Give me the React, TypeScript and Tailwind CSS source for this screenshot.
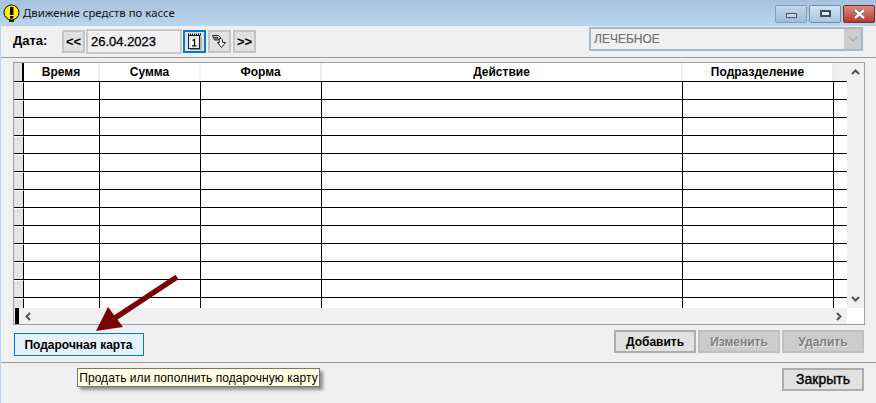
const rows = Array.from({ length: 13 });

function Cells() {
  return (
    <>
      <div className="w-[10px] shrink-0 border-r border-black bg-[#e3e3e3] border-t border-t-white" />
      <div className="w-[76px] shrink-0 border-r border-black" />
      <div className="w-[101px] shrink-0 border-r border-black" />
      <div className="w-[121px] shrink-0 border-r border-black" />
      <div className="w-[361px] shrink-0 border-r border-black" />
      <div className="w-[151px] shrink-0 border-r border-black" />
      <div className="flex-1" />
    </>
  );
}

function Btn({ label, disabled, large }: { label: string; disabled?: boolean; large?: boolean }) {
  return (
    <div
      className={`flex h-[23px] w-[82px] items-center justify-center border-2 ${
        large ? "text-[14px] [-webkit-text-stroke:0.35px_black]" : "text-[12px] font-bold"
      } ${
        disabled
          ? "border-[#bfbfbf] bg-[#cccccc] text-[#7f7f7f] [text-shadow:1px_1px_0_#e8e8e8]"
          : "border-[#adadad] bg-[#e1e1e1] text-black"
      }`}
    >
      {label}
    </div>
  );
}

function NavBtn({ children, active }: { children: React.ReactNode; active?: boolean }) {
  return (
    <div
      className={`flex h-[23px] w-[23px] items-center justify-center border-2 bg-[#e1e1e1] text-[13px] font-bold ${
        active ? "border-[#0078d7]" : "border-[#c4c4c4]"
      }`}
    >
      {children}
    </div>
  );
}

export default function App() {
  return (
    <div className="relative flex h-[403px] w-[876px] flex-col overflow-hidden bg-[#f0f0f0] font-['Liberation_Sans',Arial,sans-serif] text-black">
      {/* title bar */}
      <div className="flex h-[26px] shrink-0 items-center bg-gradient-to-b from-[#a6c1dc] to-[#bad5ee] pl-[3px]">
        <svg width="17" height="19" viewBox="0 0 17 19" className="shrink-0">
          <circle cx="8.5" cy="8.5" r="7.5" fill="#ffee00" stroke="#000" strokeWidth="1" />
          <rect x="7" y="3" width="3.4" height="8" fill="#000" />
          <rect x="7" y="12" width="3.4" height="2.5" fill="#000" />
          <rect x="6" y="16" width="5" height="2" fill="#222" />
        </svg>
        <span className="ml-[3px] font-['Noto_Sans',sans-serif] text-[11.4px] text-[#111]">Движение средств по кассе</span>
        <div className="ml-auto mr-[1px] mt-[5px] flex self-start">
          <div className="flex h-[18px] w-[32px] items-center justify-center rounded-[2px] border border-[#7f9dbc] bg-gradient-to-b from-[#c3d7ea] to-[#9fbcd8]">
            <div className="mt-[3px] h-[5px] w-[11px] border border-[#46586c] bg-[#c9d3de]" />
          </div>
          <div className="ml-[2px] flex h-[18px] w-[32px] items-center justify-center rounded-[2px] border border-[#6f8dac] bg-gradient-to-b from-[#d4e3f2] to-[#a9c4de]">
            <div className="mb-[1px] h-[7px] w-[11px] border-2 border-[#3d4f63] bg-[#e8eef4]" />
          </div>
          <div className="ml-[2px] flex h-[18px] w-[32px] items-center justify-center rounded-[2px] border border-[#6f3028] bg-gradient-to-b from-[#d9897c] to-[#b93a2c]">
            <svg width="13" height="10" viewBox="0 0 13 10">
              <path d="M2 1 L11 9 M11 1 L2 9" stroke="#555" strokeWidth="3.6" />
              <path d="M2 1 L11 9 M11 1 L2 9" stroke="#fff" strokeWidth="2.4" />
            </svg>
          </div>
        </div>
      </div>

      <div className="flex min-h-0 flex-1 flex-col border-l border-[#b9d4ee]">
        {/* date row */}
        <div className="flex h-[32px] shrink-0 items-start border-b border-[#9a9a9a] pl-[12px] pt-[1px]">
          <span className="mt-[4px] w-[49px] text-[13px] font-bold">Дата:</span>
          <div className="mt-[3px] flex items-start">
            <NavBtn>&lt;&lt;</NavBtn>
            <div className="ml-[1px] mt-[-1px] flex h-[25px] w-[96px] items-center border-2 border-[#c9c9c9] pl-[3px] text-[13px] font-medium [-webkit-text-stroke:0.3px_black]">26.04.2023</div>
            <div className="ml-[1px]">
              <NavBtn active>
                <svg width="15" height="17" viewBox="0 0 15 17">
                  <rect x="1.5" y="2.5" width="11" height="13" fill="#e8e8e8" stroke="#222" />
                  <path d="M14 4 V16.5 H3" stroke="#888" fill="none" />
                  <path d="M1 1.5 H14" stroke="#000" strokeWidth="2" strokeDasharray="1 1" />
                  <rect x="4" y="6" width="6" height="8" fill="#fff" />
                  <path d="M5.5 7.5 L7.5 6.5 V12.5 M5 12.8 H9.5" stroke="#000" strokeWidth="1.3" fill="none" />
                </svg>
              </NavBtn>
            </div>
            <div className="ml-[2px]">
              <NavBtn>
                <svg width="17" height="15" viewBox="0 0 17 15">
                  <path d="M1.5 1.5 H7.5 L9.5 3.5 L7 6 L3.5 6 Z" fill="#cfcfcf" stroke="#222" />
                  <path d="M3 3.5 H7 M4 4.8 H7" stroke="#222" strokeWidth="0.8" />
                  <path d="M8 4.5 H10 L11.5 6 V8.5 H14.5 L10.5 13.5 L6.5 8.5 H8.5 Z" fill="#fff" stroke="#222" />
                </svg>
              </NavBtn>
            </div>
            <div className="ml-[2px]">
              <NavBtn>&gt;&gt;</NavBtn>
            </div>
          </div>
          <div className="ml-[333px] flex h-[24px] w-[274px] items-center justify-between border-2 border-[#a9b8c9] pl-[3px] text-[12px] text-[#707070] [-webkit-text-stroke:0.2px_#707070]">
            <span>ЛЕЧЕБНОЕ</span>
            <div className="flex h-[20px] w-[17px] items-center justify-center bg-[#cccccc]">
              <svg width="10" height="6" viewBox="0 0 10 6">
                <path d="M1 1 L5 5 L9 1" stroke="#a8a8a8" fill="none" strokeWidth="1.2" />
              </svg>
            </div>
          </div>
        </div>

        {/* grid */}
        <div className="ml-[12px] mt-[4px] flex h-[263px] w-[852px] shrink-0 flex-col border border-[#a0a0a0] bg-white">
          <div className="flex min-h-0 flex-1">
            <div className="flex w-[833px] shrink-0 flex-col overflow-hidden">
              <div className="flex h-[19px] shrink-0 border-b border-black text-[12px] font-bold">
                <div className="w-[10px] shrink-0 border-r-2 border-black bg-[#e3e3e3]" />
                <div className="flex w-[76px] shrink-0 items-center justify-center border-r-2 border-[#eeeeee]">Время</div>
                <div className="flex w-[101px] shrink-0 items-center justify-center border-r-2 border-[#eeeeee]">Сумма</div>
                <div className="flex w-[121px] shrink-0 items-center justify-center border-r-2 border-[#eeeeee]">Форма</div>
                <div className="flex w-[361px] shrink-0 items-center justify-center border-r-2 border-[#eeeeee]">Действие</div>
                <div className="flex w-[151px] shrink-0 items-center justify-center border-r-2 border-[#eeeeee]">Подразделение</div>
                <div className="flex-1 bg-[#f0f0f0]" />
              </div>
              {rows.map((_, i) => (
                <div key={i} className="flex h-[18px] shrink-0 border-b border-black">
                  <Cells />
                </div>
              ))}
              <div className="flex min-h-0 flex-1">
                <Cells />
              </div>
            </div>
            {/* vertical scrollbar */}
            <div className="flex w-[17px] shrink-0 flex-col items-center justify-between bg-[#f0f0f0] py-[6px]">
              <svg width="9" height="6" viewBox="0 0 9 6">
                <path d="M1 5 L4.5 1.5 L8 5" stroke="#555" fill="none" strokeWidth="2" />
              </svg>
              <svg width="9" height="6" viewBox="0 0 9 6">
                <path d="M1 1 L4.5 4.5 L8 1" stroke="#555" fill="none" strokeWidth="2" />
              </svg>
            </div>
          </div>
          {/* horizontal scrollbar */}
          <div className="flex h-[16px] shrink-0">
            <div className="flex w-[833px] shrink-0 items-center justify-between bg-[#f0f0f0] pr-[5px]">
              <div className="flex items-center">
                <div className="ml-[1px] h-[16px] w-[4px] bg-black" />
                <svg width="6" height="9" viewBox="0 0 6 9" className="ml-[6px]">
                  <path d="M5 1 L1.5 4.5 L5 8" stroke="#555" fill="none" strokeWidth="2" />
                </svg>
              </div>
              <svg width="6" height="9" viewBox="0 0 6 9">
                <path d="M1 1 L4.5 4.5 L1 8" stroke="#555" fill="none" strokeWidth="2" />
              </svg>
            </div>
            <div className="flex-1 bg-white" />
          </div>
        </div>

        {/* action buttons */}
        <div className="flex h-[38px] shrink-0 items-start border-b border-[#9a9a9a] pl-[13px]">
          <div className="mt-[8px] flex h-[23px] w-[130px] items-center justify-center border border-[#0078d7] bg-[#e5f1fb] pr-[1px] text-[12px] font-bold">
            Подарочная карта
          </div>
          <div className="ml-[470px] mt-[5px] flex gap-[2px]">
            <Btn label="Добавить" />
            <Btn label="Изменить" disabled />
            <Btn label="Удалить" disabled />
          </div>
        </div>

        {/* footer */}
        <div className="flex flex-1 items-start justify-end pr-[12px] pt-[5px]">
          <Btn label="Закрыть" large />
        </div>
      </div>

      {/* tooltip */}
      <div className="absolute left-[77px] top-[368px] flex h-[19px] w-[243px] items-center justify-center whitespace-nowrap border border-[#767676] bg-[#ffffe1] text-[12px] tracking-[0.05px] shadow-[3px_3px_3px_rgba(0,0,0,0.4)]">
        Продать или пополнить подарочную карту
      </div>

      {/* callout arrow */}
      <svg className="absolute left-0 top-0" width="876" height="403" viewBox="0 0 876 403">
        <path d="M177 277 L115 318" stroke="#7a0404" strokeWidth="5.5" fill="none" />
        <path d="M96 331 L108 307 L123 327 Z" fill="#7a0404" />
      </svg>
    </div>
  );
}
